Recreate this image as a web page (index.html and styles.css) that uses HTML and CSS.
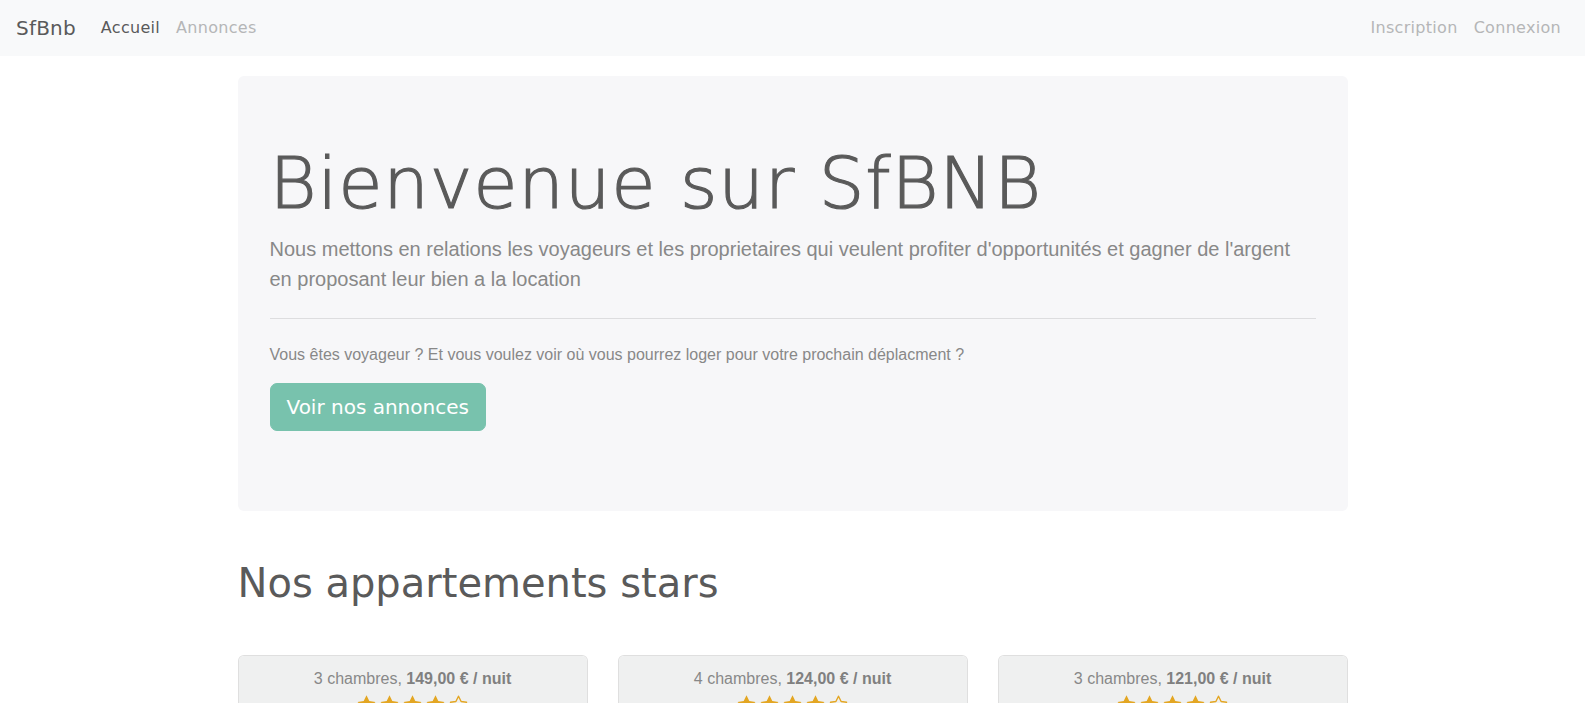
FILE: index.html
```html
<!DOCTYPE html>
<html lang="fr">
<head>
<meta charset="utf-8">
<title>SfBnb</title>
<link rel="stylesheet" href="styles.css">
</head>
<body>
<nav class="navbar">
  <a class="brand" href="#">SfBnb</a>
  <ul class="nav">
    <li><a class="nav-link active" href="#">Accueil</a></li>
    <li><a class="nav-link" href="#">Annonces</a></li>
  </ul>
  <ul class="nav nav-right">
    <li><a class="nav-link" href="#">Inscription</a></li>
    <li><a class="nav-link" href="#">Connexion</a></li>
  </ul>
</nav>

<main class="container">
  <section class="jumbotron">
    <h1 class="display">Bienvenue sur SfBNB</h1>
    <p class="lead">Nous mettons en relations les voyageurs et les proprietaires qui veulent profiter d'opportunités et gagner de l'argent en proposant leur bien a la location</p>
    <hr class="sep">
    <p class="info">Vous êtes voyageur ? Et vous voulez voir où vous pourrez loger pour votre prochain déplacment ?</p>
    <div class="actions"><a class="btn" href="#">Voir nos annonces</a></div>
  </section>

  <h1 class="section-title">Nos appartements stars</h1>

  <div class="card-deck">
    <div class="card">
      <div class="card-header">
        <div>3 chambres, <strong>149,00 € / nuit</strong></div>
        <div class="stars">
          <svg viewBox="0 0 24 24"><polygon class="full" points="12,1.5 15.2,8 22.3,9 17.1,14 18.4,21.1 12,17.7 5.6,21.1 6.9,14 1.7,9 8.8,8"/></svg>
          <svg viewBox="0 0 24 24"><polygon class="full" points="12,1.5 15.2,8 22.3,9 17.1,14 18.4,21.1 12,17.7 5.6,21.1 6.9,14 1.7,9 8.8,8"/></svg>
          <svg viewBox="0 0 24 24"><polygon class="full" points="12,1.5 15.2,8 22.3,9 17.1,14 18.4,21.1 12,17.7 5.6,21.1 6.9,14 1.7,9 8.8,8"/></svg>
          <svg viewBox="0 0 24 24"><polygon class="full" points="12,1.5 15.2,8 22.3,9 17.1,14 18.4,21.1 12,17.7 5.6,21.1 6.9,14 1.7,9 8.8,8"/></svg>
          <svg viewBox="0 0 24 24"><polygon class="empty" points="12,2.5 15,8.6 21.2,9.5 16.6,13.9 17.7,20.1 12,17.1 6.3,20.1 7.4,13.9 2.8,9.5 9,8.6"/></svg>
        </div>
      </div>
      <div class="card-body"></div>
    </div>
    <div class="card">
      <div class="card-header">
        <div>4 chambres, <strong>124,00 € / nuit</strong></div>
        <div class="stars">
          <svg viewBox="0 0 24 24"><polygon class="full" points="12,1.5 15.2,8 22.3,9 17.1,14 18.4,21.1 12,17.7 5.6,21.1 6.9,14 1.7,9 8.8,8"/></svg>
          <svg viewBox="0 0 24 24"><polygon class="full" points="12,1.5 15.2,8 22.3,9 17.1,14 18.4,21.1 12,17.7 5.6,21.1 6.9,14 1.7,9 8.8,8"/></svg>
          <svg viewBox="0 0 24 24"><polygon class="full" points="12,1.5 15.2,8 22.3,9 17.1,14 18.4,21.1 12,17.7 5.6,21.1 6.9,14 1.7,9 8.8,8"/></svg>
          <svg viewBox="0 0 24 24"><polygon class="full" points="12,1.5 15.2,8 22.3,9 17.1,14 18.4,21.1 12,17.7 5.6,21.1 6.9,14 1.7,9 8.8,8"/></svg>
          <svg viewBox="0 0 24 24"><polygon class="empty" points="12,2.5 15,8.6 21.2,9.5 16.6,13.9 17.7,20.1 12,17.1 6.3,20.1 7.4,13.9 2.8,9.5 9,8.6"/></svg>
        </div>
      </div>
      <div class="card-body"></div>
    </div>
    <div class="card">
      <div class="card-header">
        <div>3 chambres, <strong>121,00 € / nuit</strong></div>
        <div class="stars">
          <svg viewBox="0 0 24 24"><polygon class="full" points="12,1.5 15.2,8 22.3,9 17.1,14 18.4,21.1 12,17.7 5.6,21.1 6.9,14 1.7,9 8.8,8"/></svg>
          <svg viewBox="0 0 24 24"><polygon class="full" points="12,1.5 15.2,8 22.3,9 17.1,14 18.4,21.1 12,17.7 5.6,21.1 6.9,14 1.7,9 8.8,8"/></svg>
          <svg viewBox="0 0 24 24"><polygon class="full" points="12,1.5 15.2,8 22.3,9 17.1,14 18.4,21.1 12,17.7 5.6,21.1 6.9,14 1.7,9 8.8,8"/></svg>
          <svg viewBox="0 0 24 24"><polygon class="full" points="12,1.5 15.2,8 22.3,9 17.1,14 18.4,21.1 12,17.7 5.6,21.1 6.9,14 1.7,9 8.8,8"/></svg>
          <svg viewBox="0 0 24 24"><polygon class="empty" points="12,2.5 15,8.6 21.2,9.5 16.6,13.9 17.7,20.1 12,17.1 6.3,20.1 7.4,13.9 2.8,9.5 9,8.6"/></svg>
        </div>
      </div>
      <div class="card-body"></div>
    </div>
  </div>
</main>
</body>
</html>
```

FILE: styles.css
```css
* { box-sizing: border-box; }

html, body {
  margin: 0;
  padding: 0;
}

body {
  font-family: "Liberation Sans", Arial, sans-serif;
  font-size: 16px;
  line-height: 1.5;
  color: #888;
  background: #fff;
}

a { text-decoration: none; }

/* Navbar */
.navbar {
  display: flex;
  align-items: center;
  height: 56px;
  padding: 8px 16px;
  background: #f8f9fa;
  font-family: "DejaVu Sans", sans-serif;
}

.brand {
  font-size: 20px;
  line-height: 30px;
  padding: 5px 0;
  margin-right: 17px;
  color: #5a5a5a;
  letter-spacing: 0.2px;
}

.nav {
  display: flex;
  list-style: none;
  margin: 0;
  padding: 0;
}

.nav-right { margin-left: auto; }

.nav-link {
  display: block;
  padding: 8px;
  font-size: 16px;
  line-height: 24px;
  color: #b5b6b7;
  letter-spacing: 0.3px;
}

.nav-link.active { color: #5a5a5a; }

/* Layout */
.container {
  max-width: 1140px;
  padding: 0 15px;
  margin: 0 auto;
}

.jumbotron {
  margin-top: 20px;
  padding: 64px 32px;
  background: #f7f7f9;
  border-radius: 6px;
}

.display {
  margin: 0 0 8px;
  font-family: "DejaVu Sans", sans-serif;
  font-size: 72px;
  font-weight: 300;
  line-height: 1.2;
  letter-spacing: 0.8px;
  color: #5a5a5a;
  -webkit-text-stroke: 1.2px #5a5a5a;
}

.lead {
  margin: 0;
  font-size: 20px;
  line-height: 30px;
  color: #888;
}

.sep {
  margin: 24px 0;
  border: 0;
  border-top: 1px solid rgba(0, 0, 0, 0.1);
}

.info {
  margin: 0 0 16px;
  font-size: 16px;
}

.actions {
  display: flex;
  margin-bottom: 16px;
}

.btn {
  display: inline-block;
  padding: 8px 16px;
  font-family: "DejaVu Sans", sans-serif;
  font-size: 20px;
  line-height: 30px;
  color: #fff;
  background: #78c2ad;
  border: 1px solid #78c2ad;
  border-radius: 7px;
}

.section-title {
  margin: 48px 0;
  font-family: "DejaVu Sans", sans-serif;
  font-size: 40px;
  font-weight: 400;
  line-height: 48px;
  color: #5a5a5a;
}

/* Cards */
.card-deck {
  display: flex;
  gap: 30px;
}

.card {
  flex: 1 1 0;
  border: 1px solid rgba(0, 0, 0, 0.125);
  border-radius: 6px;
  background: #fff;
  overflow: hidden;
}

.card-header {
  padding: 11px 20px 12px;
  background: #eff0f0;
  border-bottom: 1px solid rgba(0, 0, 0, 0.125);
  text-align: center;
  color: #888;
}

.card-header strong { font-weight: 700; color: #808080; }

.card-body { height: 120px; }

.stars {
  display: flex;
  justify-content: center;
  gap: 2px;
  margin-top: 3px;
}

.stars svg {
  width: 21px;
  height: 21px;
}

.stars .full { fill: #e3a623; }

.stars .empty {
  fill: none;
  stroke: #e3a623;
  stroke-width: 1.6;
  stroke-linejoin: round;
}
```
